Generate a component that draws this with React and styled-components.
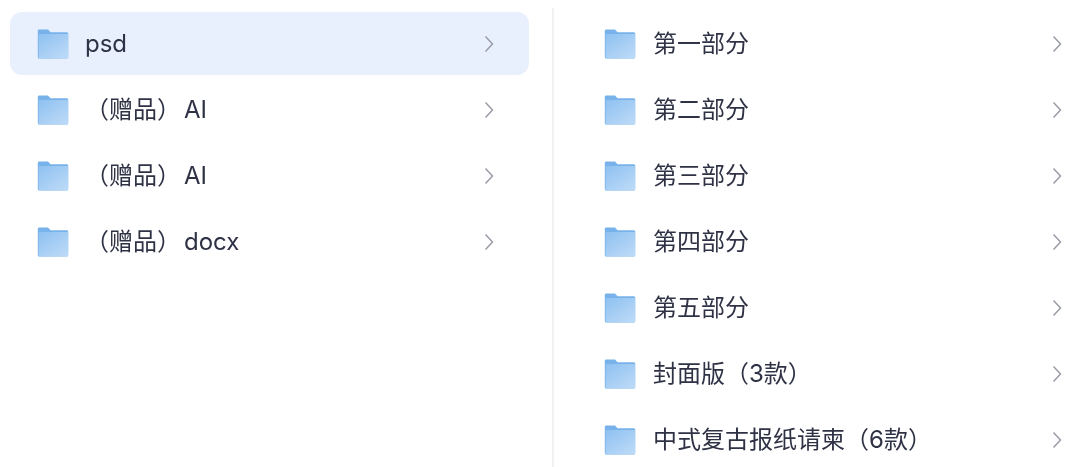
import styled, { createGlobalStyle } from "styled-components";

const Global = createGlobalStyle`
  html, body {
    margin: 0;
    padding: 0;
    background: #fff;
  }
`;

const Page = styled.div`
  width: 1080px;
  height: 467px;
  overflow: hidden;
  display: flex;
  font-family: "Inter", "Noto Sans CJK SC", sans-serif;
  color: #2f3245;
`;

const LeftPane = styled.div`
  width: 552px;
  flex: none;
  box-sizing: border-box;
  padding: 12px 23px 0 10px;
`;

const RightPane = styled.div`
  flex: 1;
  box-sizing: border-box;
  border-left: 2px solid #f1f1f3;
  margin-top: 8px;
  padding: 4px 0 0 50px;
`;

const Row = styled.div`
  height: 63px;
  margin-bottom: 3.17px;
  display: flex;
  align-items: center;
  box-sizing: border-box;
  border-radius: 12px;
  padding: 0 ${(p) => p.$padRight}px 0 ${(p) => p.$padLeft}px;
  background: ${(p) => (p.$active ? "#e8effd" : "transparent")};
`;

const FolderSvg = styled.svg`
  width: 32px;
  height: 30px;
  flex: none;
  filter: blur(0.5px);
`;

const Label = styled.span`
  flex: 1;
  margin-left: ${(p) => p.$gap}px;
  font-size: 24px;
  line-height: 30px;
  white-space: nowrap;
  filter: blur(0.3px);
`;

const Latin = styled.span`
  margin-left: ${(p) => (p.$spaced ? 3 : 0)}px;
`;

const ChevronSvg = styled.svg`
  width: 10px;
  height: 18px;
  flex: none;
  filter: blur(0.3px);
`;

const leftItems = [
  { zh: "", latin: "psd" },
  { zh: "（赠品）", latin: "AI" },
  { zh: "（赠品）", latin: "AI" },
  { zh: "（赠品）", latin: "docx" },
];

const rightItems = [
  "第一部分",
  "第二部分",
  "第三部分",
  "第四部分",
  "第五部分",
  "封面版（3款）",
  "中式复古报纸请柬（6款）",
];

const Folder = ({ id }) => (
  <FolderSvg viewBox="0 0 32 30">
    <defs>
      <linearGradient id={id} x1="0.1" y1="0" x2="0.9" y2="1">
        <stop offset="0" stopColor="#90c2f1" />
        <stop offset="1" stopColor="#bddaf7" />
      </linearGradient>
    </defs>
    <path
      d="M0.8 2C0.8 1 1.4 0.5 2.3 0.5H11L13.5 3.2H29.7C30.6 3.2 31.2 3.8 31.2 4.7V28C31.2 28.9 30.6 29.5 29.7 29.5H2.3C1.4 29.5 0.8 28.9 0.8 28Z"
      fill="#78b2ea"
    />
    <path
      d="M1.6 5H31.2V28C31.2 28.9 30.6 29.5 29.7 29.5H1.6Z"
      fill={`url(#${id})`}
    />
  </FolderSvg>
);

const Chevron = () => (
  <ChevronSvg viewBox="0 0 10 18">
    <path d="M1.5 1.5L8.5 9L1.5 16.5" fill="none" stroke="#9a9ca6" strokeWidth="1.5" />
  </ChevronSvg>
);

const App = () => (
  <Page>
    <Global />
    <LeftPane>
      {leftItems.map((item, i) => (
        <Row key={i} $active={i === 0} $padLeft={27} $padRight={35}>
          <Folder id={`left-${i}`} />
          <Label $gap={16}>
            {item.zh}
            <Latin $spaced={item.zh !== ""}>{item.latin}</Latin>
          </Label>
          <Chevron />
        </Row>
      ))}
    </LeftPane>
    <RightPane>
      {rightItems.map((name, i) => (
        <Row key={i} $padLeft={0} $padRight={18}>
          <Folder id={`right-${i}`} />
          <Label $gap={17}>{name}</Label>
          <Chevron />
        </Row>
      ))}
    </RightPane>
  </Page>
);

export default App;
